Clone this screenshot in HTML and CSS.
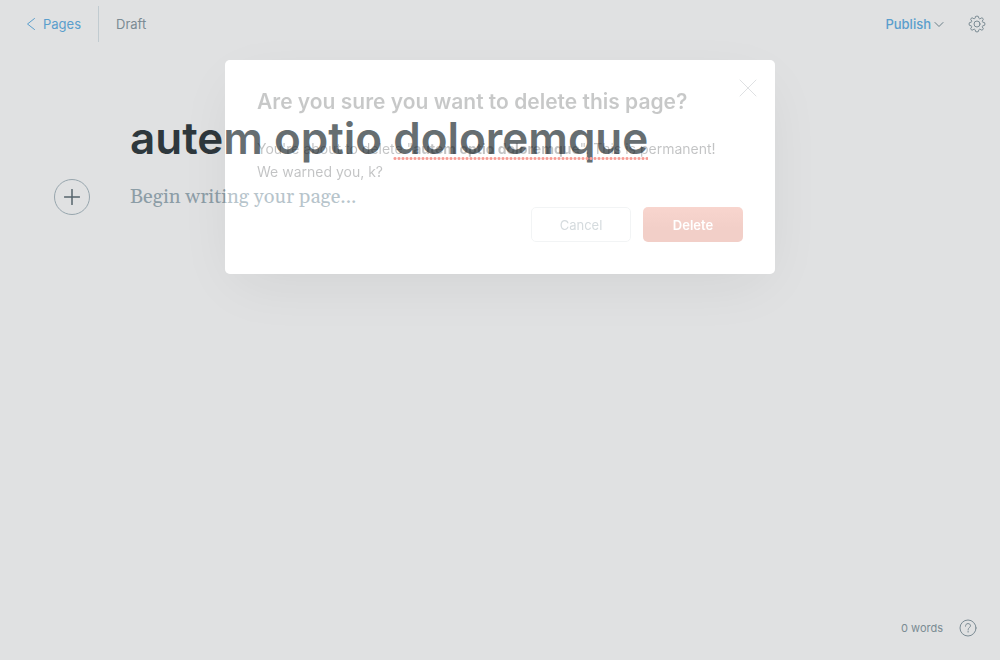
FILE: index.html
```html
<!DOCTYPE html>
<html lang="en">
<head>
<meta charset="utf-8">
<meta name="viewport" content="width=device-width, initial-scale=1">
<title>Page editor</title>
<link rel="stylesheet" href="styles.css">
</head>
<body>
<div class="editor">
  <header class="editor-header">
    <a class="back-link" href="#pages">
      <svg class="icon-back" viewBox="0 0 10 14" aria-hidden="true"><path d="M8.500 1.500 1.500 7l7 5.500"/></svg>
      Pages
    </a>
    <span class="status">Draft</span>
    <button class="publish" type="button">Publish
      <svg class="icon-down" viewBox="0 0 10 8" aria-hidden="true"><path d="M1 2.500l4 4 4-4"/></svg>
    </button>
    <button class="settings" type="button" aria-label="Settings">
      <svg class="icon-gear" viewBox="0 0 18 18" aria-hidden="true"><circle cx="9" cy="9" r="3"/><path d="M7.700 1.400Q9 .7 10.300 1.400L10.900 3.300Q11.300 4 12.100 3.700L13.900 2.800Q15.200 3.200 15.300 4.400L14.300 6Q14 6.800 14.700 7.100L16.600 7.700Q17.300 9 16.600 10.300L14.700 10.900Q14 11.200 14.300 12L15.300 13.600Q15.100 14.900 13.900 15.200L12.100 14.300Q11.300 14 10.900 14.700L10.300 16.600Q9 17.300 7.700 16.600L7.100 14.700Q6.700 14 5.900 14.300L4.100 15.200Q2.900 14.900 2.700 13.600L3.700 12Q4 11.200 3.300 10.900L1.400 10.300Q.7 9 1.400 7.700L3.300 7.100Q4 6.800 3.700 6L2.700 4.400Q2.800 3.200 4.100 2.800L5.900 3.700Q6.700 4 7.100 3.300Z"/></svg>
    </button>
  </header>
  <main class="canvas">
    <h1 class="page-title">autem optio <span class="misspelled">doloremque</span></h1>
    <div class="body-row">
      <button class="add-card" type="button" aria-label="Add a card">
        <svg class="icon-plus" viewBox="0 0 16 16" aria-hidden="true"><path d="M8 .5v15M.5 8h15"/></svg>
      </button>
      <p class="placeholder">Begin writing your page...</p>
    </div>
  </main>
  <footer class="editor-footer">
    <span>0 words</span>
    <button class="help" type="button" aria-label="Help">
      <svg class="icon-help" viewBox="0 0 18 18" aria-hidden="true"><circle cx="9" cy="9" r="8"/><path d="M6.500 7.200C6.500 5.500 7.500 4.600 9 4.600s2.500.9 2.500 2.200c0 1.600-2.400 1.900-2.400 3.700M9.100 12v1.100"/></svg>
    </button>
  </footer>
</div>
<div class="modal-layer">
  <section class="modal" role="dialog" aria-modal="true" aria-labelledby="modal-title">
    <button class="close" type="button" aria-label="Close">
      <svg class="icon-close" viewBox="0 0 18 18" aria-hidden="true"><path d="M1 1l16 16M17 1 1 17"/></svg>
    </button>
    <h2 class="modal-title" id="modal-title">Are you sure you want to delete this page?</h2>
    <p class="modal-text">You're about to delete "<strong>autem optio doloremque</strong>". This is permanent!<br>We warned you, k?</p>
    <div class="modal-actions">
      <button class="btn btn-cancel" type="button">Cancel</button>
      <button class="btn btn-delete" type="button">Delete</button>
    </div>
  </section>
</div>
</body>
</html>
```
FILE: styles.css
```css
* {
  box-sizing: border-box;
}

body {
  margin: 0;
  background: #fff;
  color: #15171a;
  font-family: Inter, "Liberation Sans", sans-serif;
  font-size: 13px;
}

h1,
h2,
p {
  margin: 0;
}

button {
  padding: 0;
  border: 0;
  background: none;
  color: inherit;
  font: inherit;
  cursor: pointer;
}

svg {
  display: block;
  fill: none;
  stroke: currentColor;
  stroke-linecap: round;
  stroke-linejoin: round;
}

.editor {
  display: flex;
  flex-direction: column;
  min-height: 100vh;
}

.editor-header {
  display: flex;
  align-items: center;
  height: 48px;
  padding: 0 14px 0 26px;
  color: #8799a2;
}

.back-link {
  display: flex;
  align-items: center;
  gap: 7px;
  height: 36px;
  padding-right: 17px;
  border-right: 1px solid #dae5ea;
  color: #60b0e6;
  text-decoration: none;
}

.icon-back {
  width: 10px;
  height: 14px;
}

.status {
  padding-left: 17px;
}

.publish {
  display: flex;
  align-items: center;
  gap: 3px;
  margin-left: auto;
  color: #60b0e6;
  font-weight: 500;
}

.icon-down {
  width: 10px;
  height: 8px;
  color: #738a94;
}

.settings {
  margin-left: 24px;
}

.icon-gear {
  width: 18px;
  height: 18px;
}

.canvas {
  flex: 1;
  padding: 62px 54px 0;
}

.page-title {
  padding-left: 76px;
  color: #2c363b;
  font-size: 44px;
  font-weight: 600;
  line-height: 56px;
}

.misspelled {
  position: relative;
}

.misspelled::after {
  position: absolute;
  right: 0;
  bottom: 5px;
  left: 0;
  height: 3px;
  background: radial-gradient(circle, #f5786c 1px, transparent 2px) 0 0 / 4px 3px;
  content: "";
}

.body-row {
  display: flex;
  align-items: center;
  gap: 40px;
  margin-top: 13px;
}

.add-card {
  display: grid;
  place-items: center;
  width: 36px;
  height: 36px;
  border: 1px solid #a9b9c1;
  border-radius: 50%;
  color: #5b6b74;
}

.icon-plus {
  width: 16px;
  height: 16px;
  stroke-width: 1.5;
}

.placeholder {
  color: #9baeb8;
  font-family: Gelasio, Georgia, "Noto Serif", "Liberation Serif", serif;
  font-size: 20px;
  line-height: 32px;
}

.editor-footer {
  display: flex;
  align-items: center;
  justify-content: flex-end;
  gap: 16px;
  padding: 0 23px 23px;
  color: #8799a2;
  font-size: 11px;
}

.icon-help {
  width: 18px;
  height: 18px;
}

.modal-layer {
  position: fixed;
  inset: 0;
  display: flex;
  align-items: flex-start;
  justify-content: center;
  padding: 60px 20px;
}

/* The spread shadow tints everything around the dialog. */
.modal {
  position: relative;
  width: 100%;
  max-width: 550px;
  padding: 28px 32px 32px;
  border-radius: 5px;
  background: rgba(255, 255, 255, 0.28);
  box-shadow: 0 16px 56px -12px rgba(0, 0, 0, 0.08), 0 0 0 200vmax rgba(61, 67, 74, 0.16);
}

.close {
  position: absolute;
  top: 19px;
  right: 18px;
  color: #dfe1e3;
}

.icon-close {
  width: 18px;
  height: 18px;
}

.modal-title {
  color: rgba(21, 23, 26, 0.24);
  font-size: 21px;
  font-weight: 600;
  line-height: 28px;
}

.modal-text {
  margin-top: 21px;
  color: rgba(21, 23, 26, 0.26);
  font-size: 14px;
  line-height: 23px;
}

.modal-text strong {
  font-weight: 700;
}

.modal-actions {
  display: flex;
  justify-content: flex-end;
  gap: 12px;
  margin-top: 24px;
}

.btn {
  width: 100px;
  height: 35px;
  border-radius: 5px;
}

.btn-cancel {
  border: 1px solid #f2f4f5;
  color: #d5dbde;
}

.btn-delete {
  background: linear-gradient(#f8d5ce, #f2cfc8 60%);
  color: #fff;
  font-weight: 600;
}
```
